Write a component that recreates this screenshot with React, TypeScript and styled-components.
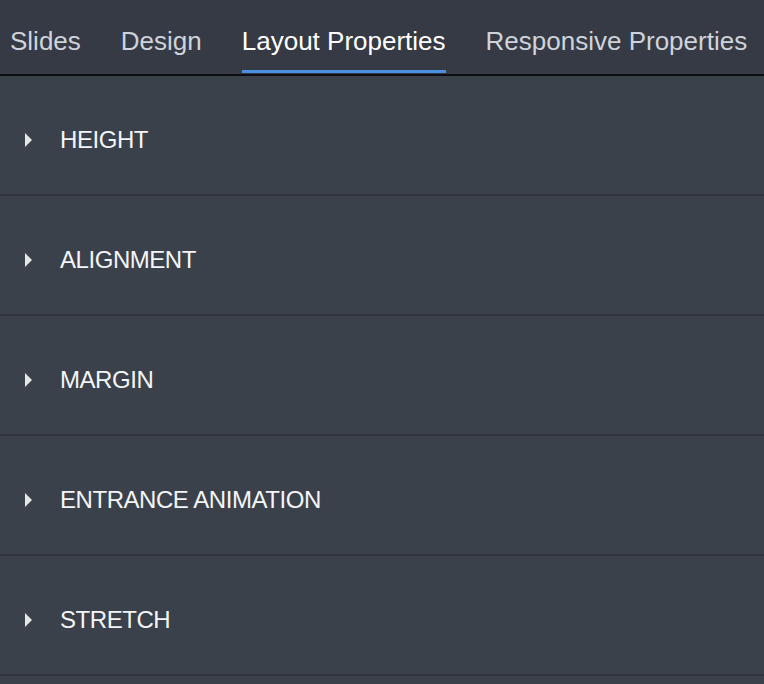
import React, { useState } from "react";
import styled, { createGlobalStyle } from "styled-components";

const Global = createGlobalStyle`
  html, body { margin: 0; padding: 0; background: #3b414b; }
  body { font-family: "Liberation Sans", Arial, Helvetica, sans-serif; }
  * { box-sizing: border-box; }
`;

const Panel = styled.div`
  width: 764px;
  height: 684px;
  background: #3b414b;
  overflow: hidden;
`;

const TabBar = styled.nav`
  display: flex;
  gap: 40px;
  height: 76px;
  padding-left: 10px;
  background: #353a44;
  border-bottom: 2px solid #0c0e11;
`;

const Tab = styled.button<{ $active?: boolean }>`
  position: relative;
  display: flex;
  align-items: center;
  height: 100%;
  padding: 8px 0 0;
  margin: 0;
  border: none;
  background: transparent;
  font-family: "Liberation Sans", Arial, Helvetica, sans-serif;
  font-size: 26px;
  color: ${(p) => (p.$active ? "#ffffff" : "#cfd3db")};
  white-space: nowrap;
  cursor: pointer;

  &::after {
    content: "";
    position: absolute;
    left: 0;
    right: 0;
    bottom: 1px;
    height: 3px;
    background: ${(p) => (p.$active ? "#4a90e2" : "transparent")};
  }
`;

const Section = styled.section`
  border-bottom: 2px solid #2f343c;
`;

const Header = styled.div`
  display: flex;
  align-items: center;
  height: 118px;
  padding: 10px 0 0 25px;
  cursor: pointer;
`;

const Caret = styled.span`
  display: block;
  width: 0;
  height: 0;
  border-top: 7px solid transparent;
  border-bottom: 7px solid transparent;
  border-left: 7px solid #e6e6e6;
  margin-right: 28px;
`;

const Label = styled.span`
  font-family: "Liberation Sans", Arial, Helvetica, sans-serif;
  font-size: 24px;
  line-height: 1;
  letter-spacing: -0.45px;
  color: #f4f5f7;
  font-weight: 400;
`;

const tabs = ["Slides", "Design", "Layout Properties", "Responsive Properties"];
const sections = ["HEIGHT", "ALIGNMENT", "MARGIN", "ENTRANCE ANIMATION", "STRETCH", ""];

export default function App() {
  const [active, setActive] = useState(2);
  return (
    <>
      <Global />
      <Panel>
        <TabBar>
          {tabs.map((t, i) => (
            <Tab key={t} $active={i === active} onClick={() => setActive(i)}>
              {t}
            </Tab>
          ))}
        </TabBar>
        {sections.map((s, i) => (
          <Section key={i}>
            <Header>
              {s && <Caret />}
              <Label>{s}</Label>
            </Header>
          </Section>
        ))}
      </Panel>
    </>
  );
}
